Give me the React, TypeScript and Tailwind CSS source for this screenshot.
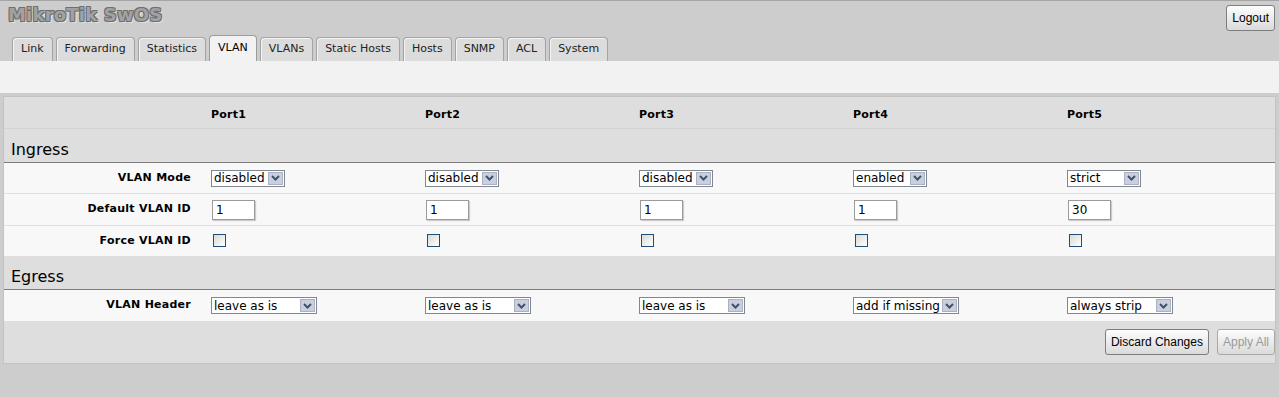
const tabs = ["Link", "Forwarding", "Statistics", "VLAN", "VLANs", "Static Hosts", "Hosts", "SNMP", "ACL", "System"];
const ports = ["Port1", "Port2", "Port3", "Port4", "Port5"];
const modes = ["disabled", "disabled", "disabled", "enabled", "strict"];
const vlanIds = ["1", "1", "1", "1", "30"];
const headers = ["leave as is", "leave as is", "leave as is", "add if missing", "always strip"];

const cols = "grid grid-cols-[207px_214px_214px_214px_214px_1fr] items-center";

function Select({ value, wide }: { value: string; wide?: boolean }) {
  return (
    <div
      className={`flex h-[17px] items-center border border-[#7f8791] bg-white ${wide ? "w-[106px]" : "w-[74px]"}`}
    >
      <span className="flex-1 pl-[2px] text-[12px] leading-none text-black">{value}</span>
      <span className="mr-px flex h-[13px] w-[15px] items-center justify-center border border-[#aab1c2] bg-[#c9cfdc]">
        <svg width="9" height="6" viewBox="0 0 9 6">
          <polyline points="1,1 4.5,4.5 8,1" fill="none" stroke="#3f5173" strokeWidth="2" />
        </svg>
      </span>
    </div>
  );
}

function Label({ children }: { children: string }) {
  return <div className="pr-[20px] text-right text-[11px] font-bold tracking-[0.25px] text-black">{children}</div>;
}

function Section({ title }: { title: string }) {
  return (
    <div className="flex h-[34px] items-end border-b border-[#7d7d7d] pb-[4px] pl-[7px] text-[16px] leading-[16px] text-black">
      {title}
    </div>
  );
}

function Btn({ children, disabled }: { children: string; disabled?: boolean }) {
  return (
    <button
      className={`h-[26px] rounded-[3px] border bg-linear-to-b from-[#fdfdfd] to-[#dadada] px-[5px] font-['Liberation_Sans',sans-serif] text-[12px] ${disabled ? "border-[#a9a9a9] text-[#9a9a9a]" : "border-[#7e7e7e] text-black"}`}
    >
      {children}
    </button>
  );
}

export default function App() {
  return (
    <div className="min-h-[397px] w-full border-t border-[#a5a5a5] bg-[#cdcdcd] font-['DejaVu_Sans',sans-serif]">
      {/* title bar */}
      <div className="flex h-[34px] items-start justify-between pl-[8px] pr-[4px] pt-[4px]">
        <h1 className="text-[18px] font-bold leading-[20px] tracking-[0.2px] text-[#a2a2a2] [text-shadow:-1px_-1px_0_#6f6f6f,1px_-1px_0_#6f6f6f,-1px_1px_0_#6f6f6f,1px_1px_0_#6f6f6f,2px_2px_0_#e2e2e2]">
          MikroTik SwOS
        </h1>
        <Btn>Logout</Btn>
      </div>

      {/* tabs */}
      <div className="flex h-[26px] items-end gap-[3px] pl-[12px]">
        {tabs.map((t) =>
          t === "VLAN" ? (
            <div
              key={t}
              className="flex h-[26px] items-center rounded-t-[4px] border border-b-0 border-[#9c9c9c] bg-[#f2f2f2] px-[8px] text-[11px] text-black"
            >
              {t}
            </div>
          ) : (
            <div
              key={t}
              className="flex h-[24px] items-center rounded-t-[4px] border border-b-0 border-[#a3a3a3] bg-[#dcdcdc] px-[8px] text-[11px] text-[#222] shadow-[inset_1px_1px_0_#f4f4f4]"
            >
              {t}
            </div>
          )
        )}
      </div>
      <div className="h-[32px] bg-[#f2f2f2]" />

      {/* panel */}
      <div className="mx-[3px] mt-[3px] border border-[#c3c3c3] bg-[#dedede]">
        <div className={`${cols} h-[32px] border-b border-[#d3d3d3] pt-[5px]`}>
          <div />
          {ports.map((p) => (
            <div key={p} className="text-[11px] font-bold tracking-[0.25px] text-black">
              {p}
            </div>
          ))}
        </div>

        <Section title="Ingress" />
        <div className={`${cols} h-[31px] border-b border-[#e0e0e0] bg-[#f8f8f8]`}>
          <Label>VLAN Mode</Label>
          {modes.map((m, i) => (
            <Select key={i} value={m} />
          ))}
        </div>
        <div className={`${cols} h-[32px] border-b border-[#e0e0e0] bg-[#f8f8f8]`}>
          <Label>Default VLAN ID</Label>
          {vlanIds.map((v, i) => (
            <input
              key={i}
              readOnly
              value={v}
              className="ml-px h-[20px] w-[43px] border border-[#9b9b9b] bg-white pl-[3px] text-[12px] text-black shadow-[1px_1px_1px_rgba(0,0,0,0.18)]"
            />
          ))}
        </div>
        <div className={`${cols} h-[30px] bg-[#f8f8f8]`}>
          <Label>Force VLAN ID</Label>
          {ports.map((p) => (
            <div
              key={p}
              className="mb-[2px] ml-[2px] h-[13px] w-[13px] border border-[#1d4f78] bg-linear-to-br from-[#d9dad4] to-white"
            />
          ))}
        </div>

        <Section title="Egress" />
        <div className={`${cols} h-[31px] bg-[#f8f8f8]`}>
          <Label>VLAN Header</Label>
          {headers.map((h, i) => (
            <Select key={i} value={h} wide />
          ))}
        </div>

        <div className="flex h-[42px] items-center justify-end gap-[8px] pr-0">
          <Btn>Discard Changes</Btn>
          <Btn disabled>Apply All</Btn>
        </div>
      </div>
    </div>
  );
}
